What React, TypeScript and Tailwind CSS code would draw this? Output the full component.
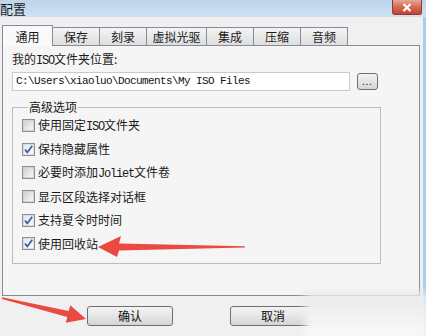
import React from 'react'

const cjk = "font-['Noto_Sans_CJK_SC','Noto_Sans',sans-serif]"

const tabs = ['通用', '保存', '刻录', '虚拟光驱', '集成', '压缩', '音频']

const options: { label: React.ReactNode; checked: boolean }[] = [
  { label: <>使用固定<Mono>ISO</Mono>文件夹</>, checked: false },
  { label: '保持隐藏属性', checked: true },
  { label: <>必要时添加<Mono>Joliet</Mono>文件卷</>, checked: false },
  { label: '显示区段选择对话框', checked: false },
  { label: '支持夏令时时间', checked: true },
  { label: '使用回收站', checked: true },
]

function Mono({ children }: { children: React.ReactNode }) {
  return (
    <span className="font-['Liberation_Mono',monospace] text-[12px] tracking-[-1.2px]">
      {children}
    </span>
  )
}

function Checkbox({ checked }: { checked: boolean }) {
  return (
    <span className="flex h-[13px] w-[13px] shrink-0 items-center justify-center border border-[#8e8f8f] bg-white">
      <span
        className={
          checked
            ? 'relative block h-[11px] w-[11px] border border-[#d8dce4] bg-gradient-to-br from-[#e4e8f0] to-[#fbfbfb]'
            : 'block h-[11px] w-[11px] border border-[#d3d3d3] bg-gradient-to-br from-[#d0d0d0] to-[#f8f8f8]'
        }
      >
        {checked && (
          <svg viewBox="0 0 11 11" className="absolute -left-px -top-px h-[11px] w-[11px]">
            <path d="M2 5.5 L4.3 8.5 L9.2 1.8" fill="none" stroke="#3b5fa8" strokeWidth="1.8" strokeLinejoin="round" />
          </svg>
        )}
      </span>
    </span>
  )
}

function Button({ children }: { children: React.ReactNode }) {
  return (
    <button className="flex h-[20px] w-[86px] items-center justify-center rounded-[3px] border border-[#707070] bg-gradient-to-b from-[#f3f3f3] via-[#e6e6e6] to-[#d4d4d4] text-[12px] text-[#111]">
      {children}
    </button>
  )
}

export default function App() {
  return (
    <div className={`relative h-[336px] w-[426px] overflow-hidden bg-[#f0f0f0] text-[12px] text-[#1a1a1a] ${cjk}`}>
      {/* title bar */}
      <div className="flex h-[17px] items-start justify-between bg-gradient-to-b from-[#bcd4ec] to-[#d0e1f3]">
        <span className="flex h-[17px] items-center text-[13px] leading-[17px] text-[#1c1c1c]">配置</span>
        <div className="mr-[4px] flex h-[15px] w-[30px] items-center justify-center rounded-b-[3px] border border-t-0 border-[#8d3b2f] bg-gradient-to-b from-[#e9a795] via-[#d46a55] to-[#c2412c]">
          <svg viewBox="0 0 10 9" className="h-[9px] w-[10px]">
            <path d="M1.5 1 L8.5 8 M8.5 1 L1.5 8" stroke="#fff" strokeWidth="2.2" />
          </svg>
        </div>
      </div>

      <div className="flex h-[319px]">
        <div className="flex flex-1 flex-col pl-[2px] pr-[3px]">
          {/* tabs */}
          <div className="mt-[8px] flex h-[20px] items-end">
            {tabs.map((t, i) =>
              i === 0 ? (
                <div
                  key={t}
                  className="relative z-10 -mb-px flex h-[21px] w-[51px] items-start justify-center border border-b-0 border-[#898c95] bg-[#f9f9f9] pt-[2px] text-[12px]"
                >
                  {t}
                </div>
              ) : (
                <div
                  key={t}
                  className={`flex h-[18px] items-center justify-center border border-l-0 border-b-0 border-[#898c95] bg-gradient-to-b from-[#f4f4f4] to-[#dedede] text-[12px] ${
                    i === 3 ? 'w-[60px]' : 'w-[47px]'
                  }`}
                >
                  {t}
                </div>
              ),
            )}
          </div>

          {/* panel */}
          <div className="flex h-[251px] flex-col border border-[#898c95] bg-[#f5f5f5] pl-[9px] pr-[38px] pt-[5px]">
            <div className="h-[16px] leading-[16px]">
              我的<Mono>ISO</Mono>文件夹位置:
            </div>
            <div className="mt-[5px] flex items-center">
              <div className="flex h-[19px] w-[338px] items-center border border-[#c6c9cf] bg-white pl-[3px] font-['Liberation_Mono',monospace] text-[11px] tracking-[-0.6px] text-[#111]">
                C:\Users\xiaoluo\Documents\My ISO Files
              </div>
              <div className="ml-[7px] flex h-[17px] w-[21px] items-end justify-center rounded-[3px] border border-[#707070] bg-gradient-to-b from-[#f3f3f3] to-[#d6d6d6] pb-[3px] text-[9px] leading-[9px] tracking-[1px]">
                ...
              </div>
            </div>

            <fieldset className="mt-[9px] h-[164px] w-[369px] border border-[#bcbcbc] pl-[9px]">
              <legend className="ml-[6px] px-px text-[12px] leading-[14px]">高级选项</legend>
              <div className="flex flex-col">
                {options.map((o, i) => (
                  <div key={i} className="flex h-[23.6px] items-center gap-[3px]">
                    <Checkbox checked={o.checked} />
                    <span className="leading-[14px]">{o.label}</span>
                  </div>
                ))}
              </div>
            </fieldset>
          </div>

          {/* buttons */}
          <div className="mt-[10px] flex gap-[57px] pl-[85px]">
            <Button>确认</Button>
            <Button>取消</Button>
          </div>
        </div>
        <div className="w-[3px] bg-[#a9cdec]" />
      </div>

      {/* watermark blur */}
      <div className="pointer-events-none absolute left-[305px] top-[292px] h-[50px] w-[125px] bg-gradient-to-b from-[#e9e9e9] to-[#fbfbfb] blur-[4px]" />

      {/* red arrows */}
      <svg className="pointer-events-none absolute left-0 top-0 h-[336px] w-[426px]" viewBox="0 0 426 336">
        <polygon
          points="98,247 121,236 119,243.5 245,246.3 245,247.6 119,250.5 117,257"
          fill="#ea4a42"
        />
        <polygon
          points="2,297.3 68.7,311.1 70.2,305.3 86,319 65.8,322.7 67.3,316.9 2,299"
          fill="#ea4a42"
        />
      </svg>
    </div>
  )
}
